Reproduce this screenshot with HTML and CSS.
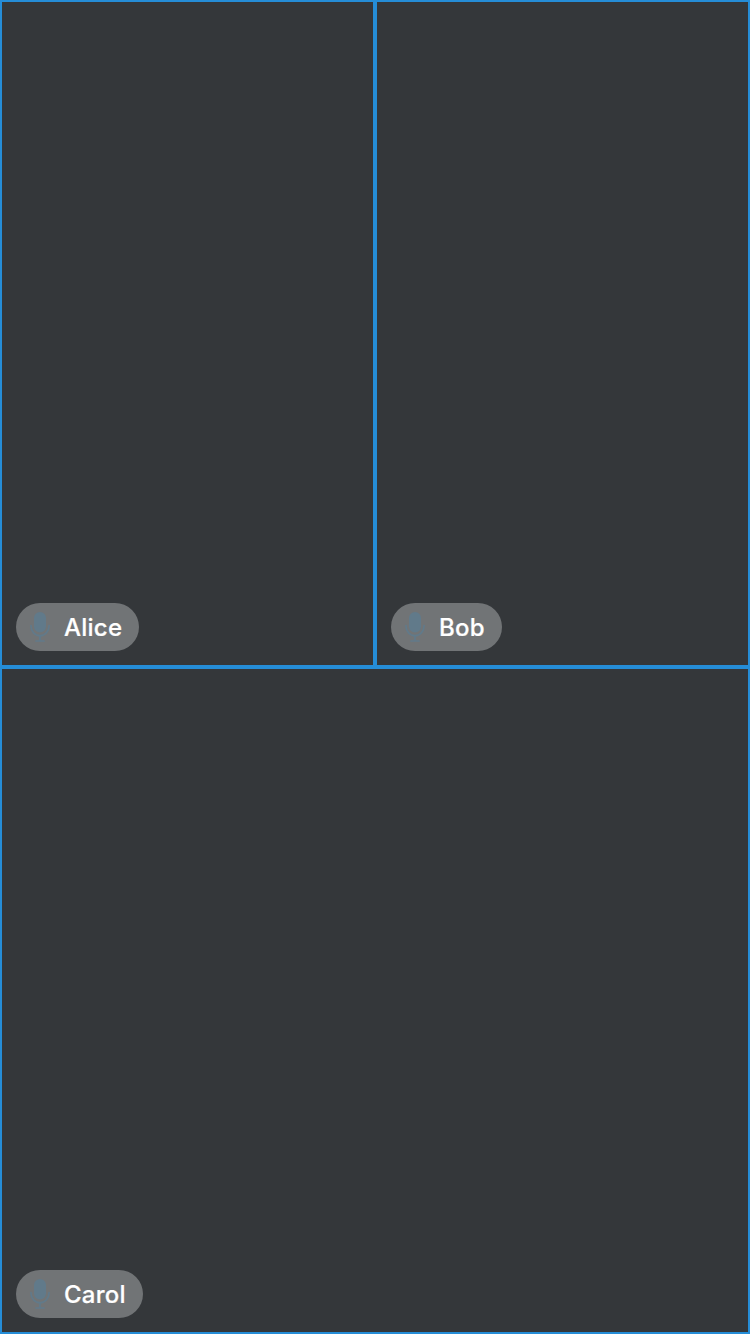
FILE: index.html
```html
<!DOCTYPE html>
<html lang="en">
<head>
<meta charset="utf-8">
<title>Call</title>
<link rel="stylesheet" href="styles.css">
</head>
<body>
<main class="grid">
  <section class="tile"><div class="label"><svg class="mic" viewBox="0 0 20 32"><rect x="4" y="1" width="12" height="20.500" rx="6"/><path class="stand" d="M.9 14.600C.9 20.500 5 24.700 10 24.700S19.100 20.500 19.100 14.600M10 24.700V30M6 30h8"/></svg><span class="name">Alice</span></div></section>
  <section class="tile"><div class="label"><svg class="mic" viewBox="0 0 20 32"><rect x="4" y="1" width="12" height="20.500" rx="6"/><path class="stand" d="M.9 14.600C.9 20.500 5 24.700 10 24.700S19.100 20.500 19.100 14.600M10 24.700V30M6 30h8"/></svg><span class="name">Bob</span></div></section>
  <section class="tile wide"><div class="label"><svg class="mic" viewBox="0 0 20 32"><rect x="4" y="1" width="12" height="20.500" rx="6"/><path class="stand" d="M.9 14.600C.9 20.500 5 24.700 10 24.700S19.100 20.500 19.100 14.600M10 24.700V30M6 30h8"/></svg><span class="name">Carol</span></div></section>
</main>
</body>
</html>
```
FILE: styles.css
```css
body { margin: 0; }
.grid {
  display: grid;
  grid-template-columns: 1fr 1fr;
  grid-template-rows: 1fr 1fr;
  height: 1334px;
}
.tile {
  box-sizing: border-box;
  display: flex;
  align-items: flex-end;
  padding: 14px;
  border: 2px solid #258dd7;
  background: #34373a;
}
.wide { grid-column: span 2; }
.label {
  box-sizing: border-box;
  display: flex;
  align-items: center;
  height: 48px;
  padding: 0 17px 0 14px;
  border-radius: 24px;
  background: #717476;
}
.mic { width: 20px; height: 32px; margin-right: 14px; fill: #617a8a; }
.stand { fill: none; stroke: #617a8a; stroke-width: 1.7; stroke-linecap: round; }
.name {
  padding-top: 2px;
  color: #fff;
  font: 500 24px/46px Inter, sans-serif;
  letter-spacing: 0.25px;
  -webkit-text-stroke: 0.2px #fff;
}
```
